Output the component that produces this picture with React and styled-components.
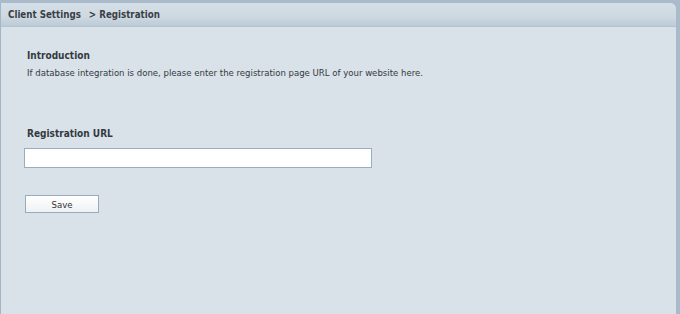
import React from "react";
import styled, { createGlobalStyle } from "styled-components";

const Global = createGlobalStyle`
  html, body { margin: 0; padding: 0; background: #a9bbca; }
  body { font-family: "DejaVu Sans Condensed", "DejaVu Sans", Verdana, sans-serif; }
`;

const Page = styled.div`
  width: 680px;
  height: 314px;
  box-sizing: border-box;
  padding: 3px 4px 0 0;
  background: #a9bbca;
  display: flex;
  flex-direction: column;
`;

const Panel = styled.div`
  flex: 1;
  display: flex;
  flex-direction: column;
  border-left: 1px solid #a4b6c6;
  border-radius: 0 6px 0 0;
  overflow: hidden;
  background: #d9e1e9;
`;

const Header = styled.div`
  height: 24px;
  box-sizing: border-box;
  padding: 0 0 0 7px;
  display: flex;
  align-items: center;
  background: linear-gradient(#d6dfe7 0%, #cdd8e1 60%, #bccbd7 100%);
  border-bottom: 1px solid #b3c3d0;
  font-size: 9.7px;
  font-weight: bold;
  color: #3a3f45;
  gap: 8px;
`;

const Body = styled.div`
  flex: 1;
  padding: 23px 0 0 26px;
  display: flex;
  flex-direction: column;
`;

const Heading = styled.div`
  font-size: 10px;
  font-weight: bold;
  color: #333a40;
  margin-top: ${(p) => p.$top || 0}px;
`;

const Text = styled.div`
  font-size: 9.5px;
  color: #333a40;
  margin-top: 6px;
`;

const Input = styled.input`
  margin: 9px 0 0 -3px;
  width: 348px;
  height: 20px;
  box-sizing: border-box;
  border: 1px solid #98adbf;
  background: #fff;
  outline: none;
`;

const Button = styled.button`
  margin: 27px 0 0 -2px;
  width: 74px;
  height: 18px;
  box-sizing: border-box;
  border: 1px solid #9aabb9;
  background: linear-gradient(#ffffff, #eef1f4);
  font-family: "DejaVu Sans Condensed", "DejaVu Sans", Verdana, sans-serif;
  font-size: 9.5px;
  color: #333;
  padding: 0;
`;

export default function App() {
  return (
    <>
      <Global />
      <Page>
        <Panel>
          <Header>
            <span>Client Settings</span>
            <span>&gt; Registration</span>
          </Header>
          <Body>
            <Heading>Introduction</Heading>
            <Text>
              If database integration is done, please enter the registration page URL of your website here.
            </Text>
            <Heading $top={50}>Registration URL</Heading>
            <Input type="text" />
            <Button>Save</Button>
          </Body>
        </Panel>
      </Page>
    </>
  );
}
